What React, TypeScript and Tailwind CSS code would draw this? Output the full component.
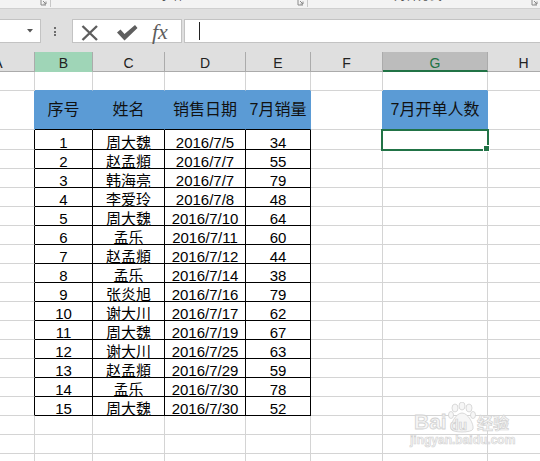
import React from "react";

type Row = { h: string; cells: (string | number)[] | null; kind: "empty" | "head" | "data" };

const data: (string | number)[][] = [
  [1, "周大魏", "2016/7/5", 34],
  [2, "赵孟頫", "2016/7/7", 55],
  [3, "韩海亮", "2016/7/7", 79],
  [4, "李爱玲", "2016/7/8", 48],
  [5, "周大魏", "2016/7/10", 64],
  [6, "孟乐", "2016/7/11", 60],
  [7, "赵孟頫", "2016/7/12", 44],
  [8, "孟乐", "2016/7/14", 38],
  [9, "张炎旭", "2016/7/16", 79],
  [10, "谢大川", "2016/7/17", 62],
  [11, "周大魏", "2016/7/19", 67],
  [12, "谢大川", "2016/7/25", 63],
  [13, "赵孟頫", "2016/7/29", 59],
  [14, "孟乐", "2016/7/30", 78],
  [15, "周大魏", "2016/7/30", 52],
];

const rows: Row[] = [
  { h: "h-[19px]", cells: null, kind: "empty" },
  { h: "h-[39px]", cells: ["序号", "姓名", "销售日期", "7月销量"], kind: "head" },
  ...data.map((d, i) => ({ h: i === 0 ? "h-[20px]" : "h-[19px]", cells: d, kind: "data" as const })),
  { h: "h-[19px]", cells: null, kind: "empty" },
  { h: "h-[19px]", cells: null, kind: "empty" },
  { h: "h-[19px]", cells: null, kind: "empty" },
];

const letters = ["A", "B", "C", "D", "E", "F", "G", "H"];

function rightCls(r: number, c: number) {
  const isData = r >= 2 && r <= 16;
  if (isData && c <= 4) return "border-r-black";
  if (r === 1 && c <= 6) return "border-r-[#5b9bd5]";
  return "border-r-[#d4d4d4]";
}

function bottomCls(r: number, c: number) {
  const isData = r >= 2 && r <= 16;
  if (r === 0 && ((c >= 1 && c <= 4) || c === 6)) return "border-b-[#5b9bd5]";
  if ((r === 1 || isData) && c >= 1 && c <= 4) return "border-b-black";
  return "border-b-[#d4d4d4]";
}

function Launcher() {
  return (
    <svg width="8" height="8" viewBox="0 0 8 8" className="block">
      <path d="M1 0 V5 H6" fill="none" stroke="#8a8a8a" strokeWidth="1" />
      <path d="M3 1 L6 4 M6 1.5 V4 H3.5" fill="none" stroke="#8a8a8a" strokeWidth="1" />
    </svg>
  );
}

export default function App() {
  return (
    <div className="relative w-[540px] h-[461px] overflow-hidden bg-white font-['Liberation_Sans','Noto_Sans_CJK_SC',sans-serif]">
      {/* ribbon bottom strip */}
      <div className="h-[9px] bg-[#f3f3f3] border-b border-[#cfcfcf] overflow-hidden flex items-start text-[12px] leading-[14px] text-[#555]">
        <span className="-mt-[11px] -ml-[4px] w-[10px]">∠</span>
        <div className="ml-[34px] mt-[0px]"><Launcher /></div>
        <div className="ml-[2px] w-px h-[7px] bg-[#c8c8c8]" />
        <span className="-mt-[11px] ml-[108px] tracking-[2px]">字体</span>
        <div className="ml-[110px]"><Launcher /></div>
        <div className="ml-[2px] w-px h-[7px] bg-[#c8c8c8]" />
        <span className="-mt-[11px] ml-[86px]">对齐方式</span>
        <div className="ml-[89px]"><Launcher /></div>
      </div>

      {/* formula bar band */}
      <div className="h-[43px] bg-[#dfdfdf] flex items-start pt-[10px]">
        <div className="w-[41px] h-[24px] bg-white border border-l-0 border-[#c3c3c3] relative">
          <svg width="6" height="4" viewBox="0 0 6 4" className="absolute left-[27px] top-[9px]">
            <polygon points="0,0 6,0 3,3.5" fill="#555" />
          </svg>
        </div>
        <div className="ml-[13px] w-[3px] mt-[8px] flex flex-col gap-[1.6px]">
          <div className="w-[2px] h-[2px] bg-[#6d6d6d]" />
          <div className="w-[2px] h-[2px] bg-[#6d6d6d]" />
          <div className="w-[2px] h-[2px] bg-[#6d6d6d]" />
        </div>
        <div className="ml-[15px] w-[110px] h-[24px] bg-white border border-[#c3c3c3] flex items-start">
          <svg width="18" height="16" viewBox="0 0 18 16" className="ml-[8px] mt-[5px]">
            <path d="M1.5 1 L16 15 M16 1 L1.5 15" stroke="#5e5e5e" strokeWidth="2.4" />
          </svg>
          <svg width="21" height="16" viewBox="0 0 21 16" className="ml-[18px] mt-[5px]">
            <polygon points="0,7.5 3.5,4.5 7.5,9 18,0 20.5,3 7.5,15.5" fill="#5e5e5e" />
          </svg>
          <span className="ml-[14px] mt-[1px] font-['Liberation_Serif',serif] italic text-[22px] leading-[22px] text-[#5e5e5e]">fx</span>
        </div>
        <div className="ml-[2px] flex-1 h-[24px] bg-white border border-r-0 border-[#c3c3c3] flex items-start">
          <div className="ml-[14px] mt-[2px] w-px h-[18px] bg-[#222]" />
        </div>
      </div>

      {/* sheet */}
      <div className="-ml-[38px] grid grid-cols-[73px_58px_72px_81px_65px_72px_105px_72px]">
        {letters.map((l, c) => {
          if (c === 1)
            return (
              <div key={l} className="h-[20px] bg-[#9fd5b7] border-r border-b border-r-[#ababab] border-b-[#9fd5b7] flex items-center justify-center pt-[3px] text-[14px] text-[#222]">
                {l}
              </div>
            );
          if (c === 6)
            return (
              <div key={l} className="h-[20px] bg-[#bcbcbc] border-r border-r-[#ababab] border-b-2 border-b-[#217346] flex items-center justify-center pt-[4px] text-[14px] text-[#217346]">
                {l}
              </div>
            );
          return (
            <div key={l} className="h-[20px] bg-[#dfdfdf] border-r border-b border-[#ababab] flex items-center justify-center pt-[3px] text-[14px] text-[#222]">
              {l}
            </div>
          );
        })}

        {rows.map((row, r) =>
          letters.map((_, c) => {
            const base = `${row.h} border-r border-b ${rightCls(r, c)} ${bottomCls(r, c)}`;
            if (row.kind === "head") {
              if (c >= 1 && c <= 4)
                return (
                  <div key={`${r}-${c}`} className={`${base} bg-[#5b9bd5] flex items-center justify-center text-[16px] text-[#111]`}>
                    {row.cells![c - 1]}
                  </div>
                );
              if (c === 6)
                return (
                  <div key={`${r}-${c}`} className={`${base} bg-[#5b9bd5] flex items-center justify-center text-[16px] text-[#111]`}>
                    7月开单人数
                  </div>
                );
            }
            if (row.kind === "data" && c >= 1 && c <= 4) {
              return (
                <div key={`${r}-${c}`} className={`${base} flex items-end justify-center text-[15px] leading-[13px] text-black`}>
                  {row.cells![c - 1]}
                </div>
              );
            }
            if (r === 2 && c === 6) {
              return (
                <div key={`${r}-${c}`} className={`${base} relative`}>
                  <div className="absolute -left-[2px] -top-[1px] w-[108px] h-[22px] border-2 border-[#217346] z-10">
                    <div className="absolute -right-[3px] -bottom-[3px] w-[7px] h-[7px] bg-[#217346] border border-white" />
                  </div>
                </div>
              );
            }
            return <div key={`${r}-${c}`} className={base} />;
          })
        )}
      </div>

      {/* watermark */}
      <div className="absolute left-[414px] top-[410px] text-[21px] leading-[24px] font-bold text-[#f6f6f6] [-webkit-text-stroke:0.8px_#d2d2d2] pointer-events-none">
        Bai
      </div>
      <svg width="32" height="32" viewBox="0 0 32 32" className="absolute left-[446px] top-[402px] pointer-events-none">
        <g fill="#f6f6f6" stroke="#d2d2d2" strokeWidth="0.8">
          <ellipse cx="9" cy="6" rx="3" ry="4" />
          <ellipse cx="16" cy="4" rx="3" ry="4" />
          <ellipse cx="23" cy="6" rx="3" ry="4" />
          <ellipse cx="5" cy="13" rx="2.5" ry="3.5" />
          <ellipse cx="27" cy="13" rx="2.5" ry="3.5" />
          <path d="M16 11 C10 11 4 22 5 27 C6 31 26 31 27 27 C28 22 22 11 16 11 Z" />
        </g>
      </svg>
      <div className="absolute left-[450px] top-[417px] text-[14px] leading-[16px] font-bold text-[#f6f6f6] [-webkit-text-stroke:0.7px_#cfcfcf] pointer-events-none">
        du
      </div>
      <div className="absolute left-[477px] top-[414px] text-[16px] leading-[20px] font-bold text-[#f6f6f6] [-webkit-text-stroke:0.7px_#d2d2d2] pointer-events-none">
        经验
      </div>
      <div className="absolute left-[410px] top-[433px] text-[12px] leading-[14px] font-bold text-[#f6f6f6] [-webkit-text-stroke:0.6px_#d2d2d2] pointer-events-none">
        jingyan.baidu.com
      </div>
    </div>
  );
}
